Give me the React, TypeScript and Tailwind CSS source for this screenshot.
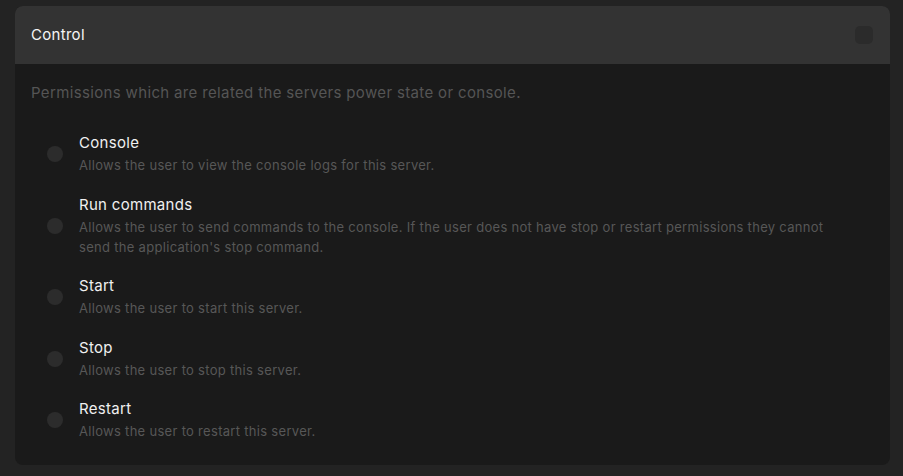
import React from "react";

interface Permission {
  key: string;
  title: string;
  description: string;
}

const permissions: Permission[] = [
  {
    key: "console",
    title: "Console",
    description: "Allows the user to view the console logs for this server.",
  },
  {
    key: "command",
    title: "Run commands",
    description:
      "Allows the user to send commands to the console. If the user does not have stop or restart permissions they cannot send the application's stop command.",
  },
  {
    key: "start",
    title: "Start",
    description: "Allows the user to start this server.",
  },
  {
    key: "stop",
    title: "Stop",
    description: "Allows the user to stop this server.",
  },
  {
    key: "restart",
    title: "Restart",
    description: "Allows the user to restart this server.",
  },
];

function PermissionRow({ perm }: { perm: Permission }) {
  return (
    <div className="flex items-center gap-4 pl-4">
      {/* radio */}
      <div className="w-4 h-4 rounded-full bg-[#2c2c2c] flex-shrink-0" />
      <div className="w-[755px]">
        <p className="text-[15px] leading-5 tracking-[0.3px] text-[#f0f0f0]">
          {perm.title}
        </p>
        <p className="mt-[2px] text-[13px] leading-5 tracking-[0.3px] text-[#575757]">
          {perm.description}
        </p>
      </div>
    </div>
  );
}

export default function App() {
  return (
    <div
      className="min-h-[476px] w-full bg-[#232323] pt-[6px] px-[15px] pb-[11px] box-border"
      style={{ fontFamily: "Inter, 'Noto Sans', sans-serif" }}
    >
      <div className="w-[875px] rounded-lg overflow-hidden bg-[#1a1a1a]">
        {/* Header */}
        <div className="h-[58px] bg-[#333333] flex items-center justify-between pl-4 pr-[17px]">
          <h2 className="text-[15px] tracking-[0.3px] text-[#f5f5f5]">Control</h2>
          <div className="w-[18px] h-[18px] rounded-[5px] bg-[#2b2b2b]" />
        </div>

        {/* Body */}
        <div className="px-4 pt-[18px] pb-6">
          <p className="text-[15px] leading-[22px] tracking-[0.35px] text-[#555555]">
            Permissions which are related the servers power state or console.
          </p>
          <div className="mt-[29px] flex flex-col gap-[19.5px]">
            {permissions.map((perm) => (
              <PermissionRow key={perm.key} perm={perm} />
            ))}
          </div>
        </div>
      </div>
    </div>
  );
}
